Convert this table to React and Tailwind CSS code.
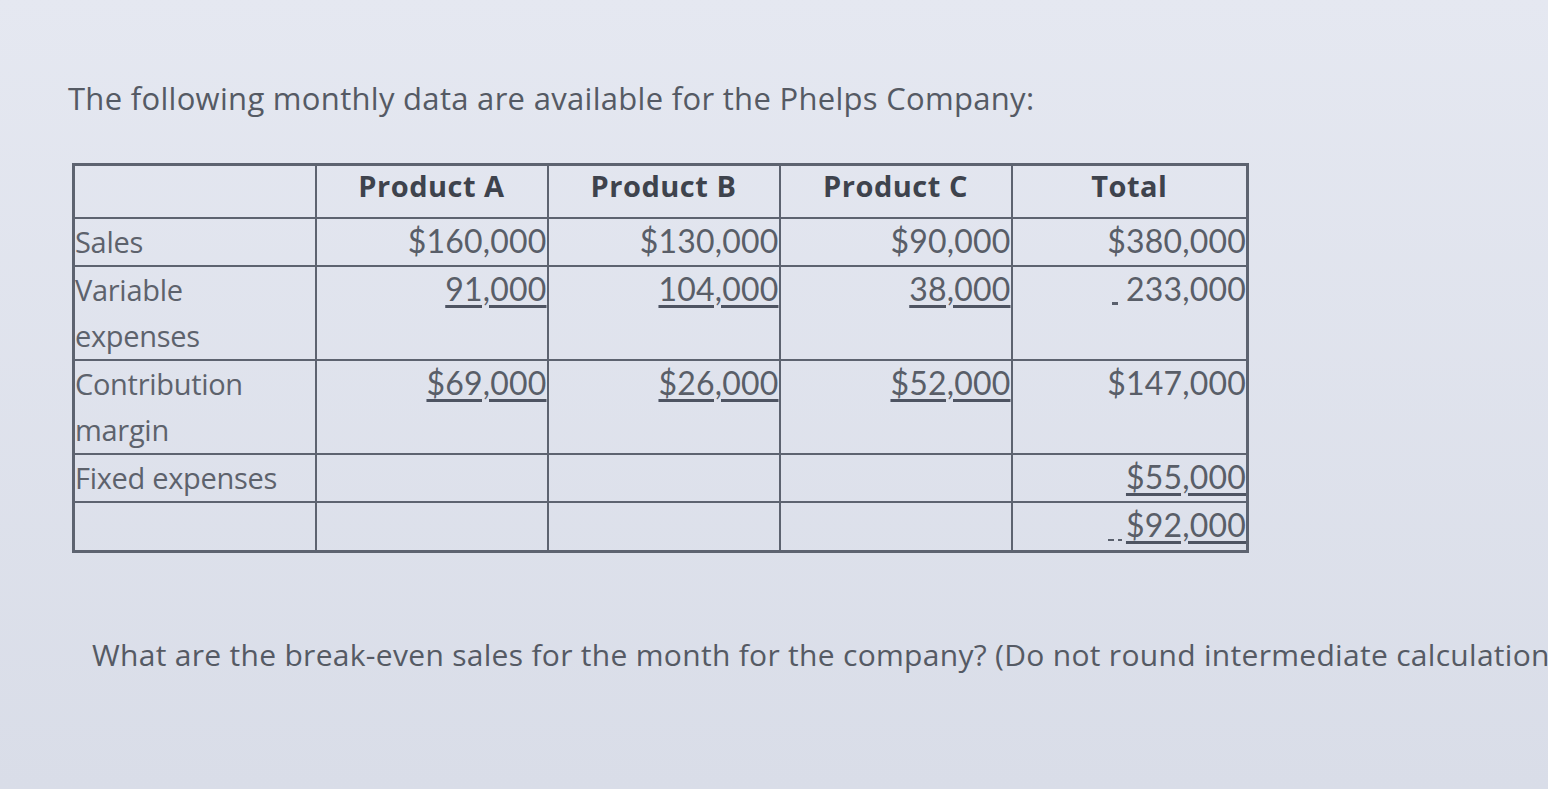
import React from "react";

const sans = { fontFamily: "'Open Sans', Lato, sans-serif" };
const nums = { fontFamily: "Lato, 'Open Sans', sans-serif" };

const rows = [
  { label: "Sales", h: "h-[47px]", vals: ["$160,000", "$130,000", "$90,000", "$380,000"], u: [false, false, false, false] },
  { label: "Variable expenses", h: "h-[91px]", vals: ["91,000", "104,000", "38,000", "233,000"], u: [true, true, true, false], lead: [null, null, null, "dash"] },
  { label: "Contribution margin", h: "h-[94px]", vals: ["$69,000", "$26,000", "$52,000", "$147,000"], u: [true, true, true, false] },
  { label: "Fixed expenses", h: "h-[46px]", vals: ["", "", "", "$55,000"], u: [false, false, false, true] },
  { label: "", h: "h-[50px]", vals: ["", "", "", "$92,000"], u: [false, false, false, true], lead: [null, null, null, "dash2"] },
];

const Value = ({ text, underline, lead }) => {
  if (!text) return null;
  return (
    <span className="inline-flex items-baseline">
      {lead === "dash" && <span className="mr-[8px] inline-block h-[3px] w-[6px] translate-y-[4px] bg-[#5a606d]"></span>}
      {lead === "dash2" && (
        <span className="mr-[4px] inline-flex gap-[4px] translate-y-[4px]">
          <span className="inline-block h-[2px] w-[6px] bg-[#5a606d]"></span>
          <span className="inline-block h-[2px] w-[4px] bg-[#5a606d]"></span>
        </span>
      )}
      <span className={underline ? "underline decoration-[3px] underline-offset-[4px] decoration-[#4e5462]" : ""}>{text}</span>
    </span>
  );
};

export default function App() {
  return (
    <div className="min-h-[789px] w-full overflow-hidden bg-linear-to-b from-[#e5e8f1] to-[#d9dde8] text-[#5a5f69]" style={sans}>
      <p className="pl-[68px] pt-[78px] text-[31px] leading-[40px] tracking-[0.3px] text-[#555a64]">
        The following monthly data are available for the Phelps Company:
      </p>

      <table className="ml-[72px] mt-[45px] border-collapse border-[3px] border-[#5d6370]">
        <thead>
          <tr className="h-[53px]">
            <th className="w-[242px] border-[2px] border-[#5d6370]"></th>
            {["Product A", "Product B", "Product C", "Total"].map((t, i) => (
              <th
                key={t}
                className={`${i === 3 ? "w-[236px]" : "w-[232px]"} border-[2px] border-[#5d6370] pb-[10px] text-center text-[29px] font-bold leading-[32px] tracking-[0.5px] text-[#3e434d]`}
              >
                {t}
              </th>
            ))}
          </tr>
        </thead>
        <tbody>
          {rows.map((r, ri) => (
            <tr key={ri} className={r.h}>
              <td className="border-[2px] border-[#5d6370] align-top text-[29px] leading-[46px] tracking-[-0.3px] text-[#5d626c]">
                {r.label}
              </td>
              {r.vals.map((v, vi) => (
                <td key={vi} style={nums} className="border-[2px] border-[#5d6370] align-top text-right text-[32px] leading-[44px] tracking-[0.2px] text-[#595e68]">
                  <Value text={v} underline={r.u[vi]} lead={r.lead ? r.lead[vi] : null} />
                </td>
              ))}
            </tr>
          ))}
        </tbody>
      </table>

      <p className="whitespace-nowrap pl-[92px] pt-[82px] text-[30px] leading-[40px] tracking-[0.3px] text-[#555a64]">
        What are the break-even sales for the month for the company? (Do not round intermediate calculations.)
      </p>
    </div>
  );
}
